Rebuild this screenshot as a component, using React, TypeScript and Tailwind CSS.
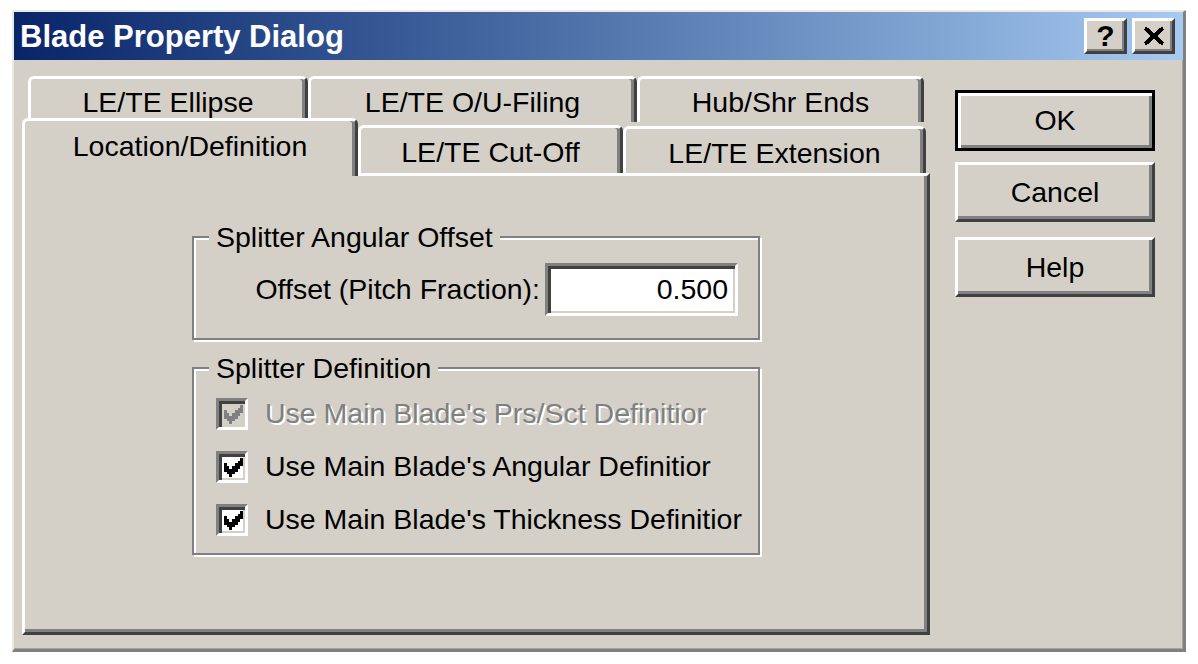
import React from "react";

const FONT = { fontFamily: '"Liberation Sans", Arial, sans-serif' };

// classic 7x7 check glyph, pixel cells
const CHECK_CELLS: [number, number][] = [
  [6, 0],
  [5, 1], [6, 1],
  [0, 2], [4, 2], [5, 2], [6, 2],
  [0, 3], [1, 3], [3, 3], [4, 3], [5, 3],
  [0, 4], [1, 4], [2, 4], [3, 4], [4, 4],
  [1, 5], [2, 5], [3, 5],
  [2, 6],
];

const CheckGlyph: React.FC<{ color: string }> = ({ color }) => (
  <svg width="19" height="19" viewBox="0 0 7 7" shapeRendering="crispEdges">
    {CHECK_CELLS.map(([x, y]) => (
      <rect key={`${x}-${y}`} x={x} y={y} width="1" height="1" fill={color} />
    ))}
  </svg>
);

interface CheckRowProps {
  label: string;
  disabled?: boolean;
}

const CheckRow: React.FC<CheckRowProps> = ({ label, disabled }) => (
  <div className="flex h-[53px] items-center gap-[17px]">
    <div
      className={`flex h-[32px] w-[32px] items-center justify-center border-[3px] border-t-[#808080] border-l-[#808080] border-r-white border-b-white shadow-[inset_3px_3px_0_#404040,inset_-2px_-2px_0_#d4d0c8] ${
        disabled ? "bg-[#d4d0c8]" : "bg-white"
      }`}
    >
      <div className="ml-[2px] mt-[2px]">
        <CheckGlyph color={disabled ? "#808080" : "#000000"} />
      </div>
    </div>
    <span
      className={`whitespace-nowrap ${
        disabled ? "text-[#808080] [text-shadow:2px_2px_0_#ffffff]" : "text-black"
      }`}
    >
      {label}
    </span>
  </div>
);

interface TabProps {
  label: string;
  className: string;
}

const Tab: React.FC<TabProps> = ({ label, className }) => (
  <div
    className={`flex shrink-0 items-center justify-center rounded-t-[6px] border-t-[3px] border-l-[3px] border-r-[3px] border-t-white border-l-white border-r-[#404040] bg-[#d4d0c8] shadow-[inset_-3px_0_0_#808080] pt-[4px] text-black ${className}`}
  >
    {label}
  </div>
);

const PushButton: React.FC<{ label: string; isDefault?: boolean }> = ({ label, isDefault }) =>
  isDefault ? (
    <button className="flex h-[61px] w-[200px] items-center justify-center border-[3px] border-black bg-[#d4d0c8] text-black shadow-[inset_3px_3px_0_#ffffff,inset_-3px_-3px_0_#808080]">
      {label}
    </button>
  ) : (
    <button className="flex h-[60px] w-[200px] items-center justify-center border-[3px] border-t-white border-l-white border-r-[#404040] border-b-[#404040] bg-[#d4d0c8] text-black shadow-[inset_-3px_-3px_0_#808080]">
      {label}
    </button>
  );

const CaptionButton: React.FC<{ children: React.ReactNode }> = ({ children }) => (
  <div className="flex h-[36px] w-[43px] items-center justify-center border-[3px] border-t-white border-l-white border-r-[#404040] border-b-[#404040] bg-[#d4d0c8] shadow-[inset_-2px_-2px_0_#808080]">
    {children}
  </div>
);

export default function App() {
  return (
    <div className="min-h-screen bg-white pl-[12px] pt-[10px] text-[28.5px] leading-none" style={FONT}>
      <div className="flex h-[642px] w-[1174px] flex-col border-t-2 border-l-2 border-r-[3px] border-b-[3px] border-t-[#ece9e2] border-l-[#ece9e2] border-r-[#808080] border-b-[#808080] bg-[#d4d0c8] shadow-[inset_-1px_-1px_0_#a8a49c]">
        {/* Title bar */}
        <div className="flex h-[48px] items-center justify-between bg-linear-to-r from-[#0a246a] to-[#a6caf0] pl-[6px] pr-[8px]">
          <span className="text-[31px] font-bold text-white">Blade Property Dialog</span>
          <div className="flex items-center gap-[5px]">
            <CaptionButton>
              <span className="text-[30px] font-bold text-black">?</span>
            </CaptionButton>
            <CaptionButton>
              <svg width="22" height="20" viewBox="0 0 11 10" shapeRendering="crispEdges">
                <path d="M1 1 L10 9 M10 1 L1 9" stroke="#000" strokeWidth="2" />
              </svg>
            </CaptionButton>
          </div>
        </div>

        {/* Body */}
        <div className="flex flex-row">
          {/* Tab control */}
          <div className="ml-[8px] mt-[16px] flex flex-col">
            <div className="flex h-[46px] pl-[6px]">
              <Tab label="LE/TE Ellipse" className="h-[46px] w-[280px]" />
              <Tab label="LE/TE O/U-Filing" className="h-[46px] w-[329px]" />
              <Tab label="Hub/Shr Ends" className="h-[46px] w-[287px]" />
            </div>
            <div className="flex h-[51px] items-end">
              <Tab label="Location/Definition" className="relative z-10 -mb-[3px] h-[58px] w-[336px] pb-[8px]" />
              <Tab label="LE/TE Cut-Off" className="h-[48px] w-[265px]" />
              <Tab label="LE/TE Extension" className="h-[47px] w-[303px]" />
            </div>

            {/* Tab page */}
            <div className="flex h-[462px] w-[908px] flex-col border-[3px] border-t-white border-l-white border-r-[#404040] border-b-[#404040] shadow-[inset_-3px_-3px_0_#808080] pl-[167px] pt-[60px]">
              {/* Splitter Angular Offset */}
              <div className="relative h-[104px] w-[568px] border-2 border-[#808080] shadow-[inset_2px_2px_0_#ffffff,2px_2px_0_#ffffff]">
                <span className="absolute -top-[16px] left-[15px] bg-[#d4d0c8] px-[7px] leading-[30px]">
                  Splitter Angular Offset
                </span>
                <div className="flex items-center justify-end gap-[5px] pr-[20px] pt-[25px]">
                  <span>Offset (Pitch Fraction):</span>
                  <div className="flex h-[53px] w-[193px] items-center justify-end border-[3px] border-t-[#808080] border-l-[#808080] border-r-white border-b-white bg-white pr-[7px] shadow-[inset_3px_3px_0_#404040,inset_-2px_-2px_0_#d4d0c8]">
                    0.500
                  </div>
                </div>
              </div>

              {/* Splitter Definition */}
              <div className="relative mt-[27px] h-[188px] w-[568px] border-2 border-[#808080] pl-[22px] pt-[18px] shadow-[inset_2px_2px_0_#ffffff,2px_2px_0_#ffffff]">
                <span className="absolute -top-[16px] left-[15px] bg-[#d4d0c8] px-[7px] leading-[30px]">
                  Splitter Definition
                </span>
                <CheckRow label="Use Main Blade's Prs/Sct Definitior" disabled />
                <CheckRow label="Use Main Blade's Angular Definitior" />
                <CheckRow label="Use Main Blade's Thickness Definitior" />
              </div>
            </div>
          </div>

          {/* Buttons */}
          <div className="ml-[25px] mt-[30px] flex flex-col">
            <PushButton label="OK" isDefault />
            <div className="mt-[11px]">
              <PushButton label="Cancel" />
            </div>
            <div className="mt-[15px]">
              <PushButton label="Help" />
            </div>
          </div>
        </div>
      </div>
    </div>
  );
}
